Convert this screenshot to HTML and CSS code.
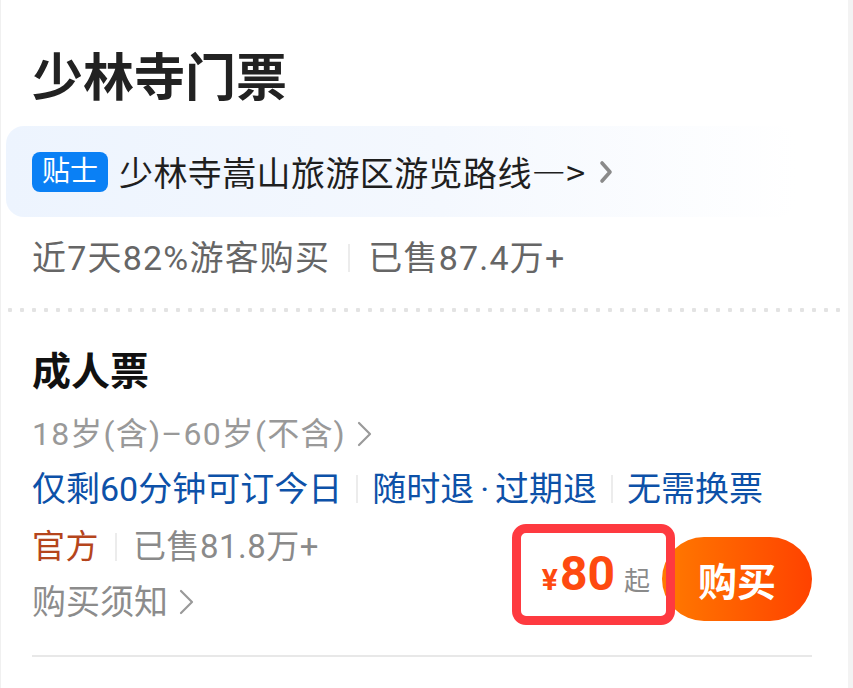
FILE: index.html
```html
<!DOCTYPE html>
<html lang="zh-CN">
<head>
  <meta charset="UTF-8" />
  <meta name="viewport" content="width=device-width, initial-scale=1.0"/>
  <title>少林寺门票</title>
  <link rel="stylesheet" href="styles.css">
</head>
<body>

<div class="page">
  <h1 class="title">少林寺门票</h1>

  <div class="tip">
    <span class="tip-tag">贴士</span>
    <span class="tip-text">少林寺嵩山旅游区游览路线—&gt;</span>
    <svg class="chev-bold" width="16" height="26" viewBox="0 0 16 26">
      <polyline points="4,4 12,13 4,22" fill="none" stroke="#8a8a8a" stroke-width="3.6" stroke-linecap="round" stroke-linejoin="round"/>
    </svg>
  </div>

  <div class="stats">
    <span>近7天82%游客购买</span>
    <span class="sep"></span>
    <span>已售87.4万+</span>
  </div>

  <div class="dots"></div>

  <div class="ticket-name">成人票</div>
  <div class="ticket-age">
    <span>18岁(含)–60岁(不含)</span>
    <svg class="chev" width="18" height="28" viewBox="0 0 18 28">
      <polyline points="3,3 14,14 3,25" fill="none" stroke="#9a9a9a" stroke-width="2.2" stroke-linecap="round" stroke-linejoin="round"/>
    </svg>
  </div>
  <div class="ticket-tags">
    <span>仅剩60分钟可订今日</span>
    <span class="sep"></span>
    <span>随时退<span class="mid">·</span>过期退</span>
    <span class="sep"></span>
    <span>无需换票</span>
  </div>

  <div class="ticket-foot">
    <div class="foot-left">
      <div class="meta">
        <span class="official">官方</span>
        <span class="sep"></span>
        <span>已售81.8万+</span>
      </div>
      <div class="notice">
        <span>购买须知</span>
        <svg class="chev" width="18" height="28" viewBox="0 0 18 28">
          <polyline points="3,3 14,14 3,25" fill="none" stroke="#9a9a9a" stroke-width="2.2" stroke-linecap="round" stroke-linejoin="round"/>
        </svg>
      </div>
    </div>
    <div class="buy">
      <div class="price">
        <span class="price-line"><span class="yen">¥</span><span class="num">80</span><span class="from">起</span></span>
      </div>
      <button class="buy-btn">购买</button>
    </div>
  </div>

  <div class="divider"></div>
</div>

</body>
</html>
```

FILE: styles.css
```css
body {
  margin: 0;
  background: #f3f3f3;
  font-family: "Roboto", "Noto Sans CJK SC", sans-serif;
  color: #222;
}
.page {
  width: 780px;
  min-height: 639px;
  background: #fff;
  border-left: 1px solid #f0f0f0;
  padding: 49px 36px 0 31px;
}
.title {
  margin: 0;
  font-size: 51px;
  line-height: 60px;
  font-weight: 600;
  color: #222;
}
.tip {
  display: flex;
  align-items: center;
  height: 91px;
  margin: 17px 16px 0 -26px;
  padding-left: 26px;
  border-radius: 18px;
  background: linear-gradient(90deg, #edf4fe 0%, #f4f8fe 55%, #ffffff 100%);
}
.tip-tag {
  height: 40px;
  line-height: 40px;
  padding: 0 10px;
  border-radius: 8px;
  background: #0a80f5;
  color: #fff;
  font-size: 28px;
}
.tip-text {
  margin-left: 11px;
  font-family: "Noto Sans CJK SC", sans-serif;
  font-size: 34px;
  line-height: 44px;
  letter-spacing: 0.4px;
  color: #1f1f1f;
}
.chev-bold {
  margin-left: 12px;
}
.stats {
  display: flex;
  align-items: center;
  margin-top: 19px;
  font-size: 34px;
  line-height: 44px;
  letter-spacing: 1.2px;
  color: #666;
}
.sep {
  display: inline-block;
  width: 2px;
  height: 28px;
  background: #ececec;
  margin: 0 18px;
}
.dots {
  height: 4px;
  margin: 28px -36px 0 -31px;
  background-image: radial-gradient(circle, #e3e3e3 2px, transparent 2.5px);
  background-size: 12px 4px;
  background-position: 3px 0;
}
.ticket-name {
  margin-top: 35px;
  font-size: 39px;
  line-height: 50px;
  font-weight: 700;
  color: #111;
}
.ticket-age {
  display: flex;
  align-items: center;
  margin-top: 15px;
  font-size: 32px;
  line-height: 44px;
  letter-spacing: 1.2px;
  color: #999;
}
.chev {
  margin-left: 10px;
}
.ticket-tags {
  display: flex;
  align-items: center;
  margin-top: 11px;
  font-size: 34px;
  line-height: 44px;
  color: #0d51a8;
}
.ticket-tags .sep {
  margin: 0 14px;
}
.mid {
  padding: 0 6px;
}
.ticket-foot {
  display: flex;
  justify-content: space-between;
  align-items: flex-start;
  margin-top: 14px;
}
.meta {
  display: flex;
  align-items: center;
  font-size: 33px;
  line-height: 44px;
  letter-spacing: 0.5px;
  color: #8a8a8a;
}
.meta .sep {
  margin: 0 16px;
}
.official {
  color: #b5451c;
}
.notice {
  display: flex;
  align-items: center;
  margin-top: 11px;
  font-size: 34px;
  line-height: 44px;
  color: #8c8c8c;
}
.buy {
  display: flex;
  align-items: center;
  margin-top: 12px;
}
.price {
  position: relative;
  display: flex;
  align-items: center;
  height: 84px;
  padding-bottom: 4px;
  box-sizing: border-box;
}
.price::after {
  content: "";
  position: absolute;
  left: -30px;
  right: -25px;
  top: -13px;
  bottom: -4px;
  border: 9px solid #fe3a40;
  border-radius: 14px;
}
.price-line {
  display: flex;
  align-items: baseline;
  line-height: 48px;
  color: #fe4a10;
  font-weight: 700;
}
.yen {
  font-size: 30px;
  margin-right: 2px;
}
.num {
  font-size: 48px;
}
.from {
  margin-left: 9px;
  font-size: 26px;
  font-weight: 400;
  color: #8a8a8a;
}
.buy-btn {
  width: 150px;
  height: 84px;
  margin-left: 12px;
  border: none;
  border-radius: 42px;
  background: linear-gradient(90deg, #ff7a00, #ff4200);
  color: #fff;
  font-family: "Noto Sans CJK SC", sans-serif;
  font-size: 39px;
  font-weight: 700;
  padding: 0;
}
.divider {
  height: 2px;
  margin-top: 31px;
  background: #e8e8e8;
}
```
